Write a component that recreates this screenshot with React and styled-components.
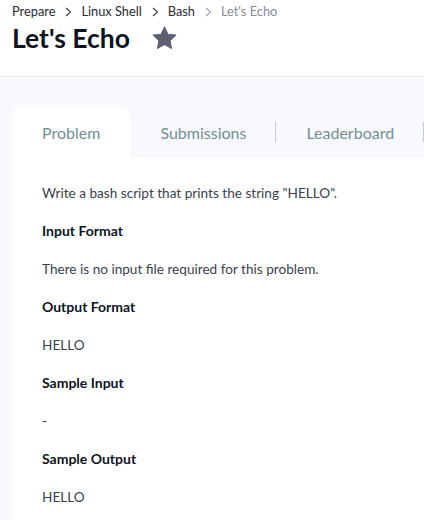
import styled, { createGlobalStyle } from "styled-components";

const GlobalStyle = createGlobalStyle`
  html, body {
    margin: 0;
    padding: 0;
    background: #f8f9fd;
    font-family: "Lato", "Noto Sans", sans-serif;
    overflow: hidden;
  }
`;

const crumbs = ["Prepare", "Linux Shell", "Bash"];
const tabs = ["Problem", "Submissions", "Leaderboard"];

const sections = [
    { body: 'Write a bash script that prints the string "HELLO".' },
    { title: "Input Format", body: "There is no input file required for this problem." },
    { title: "Output Format", body: "HELLO" },
    { title: "Sample Input", body: "-" },
    { title: "Sample Output", body: "HELLO" },
];

const Chevron = () => (
    <svg width="7" height="10" viewBox="0 0 7 10">
        <path d="M1 1l4.5 4L1 9" fill="none" stroke="currentColor" strokeWidth="1.1" />
    </svg>
);

const Star = () => (
    <svg width="25" height="24" viewBox="0 0 24 23">
        <path
            d="M12 0.8l3.3 7 7.5.9-5.5 5.2 1.4 7.6L12 17.8l-6.7 3.7 1.4-7.6L1.2 8.7l7.5-.9z"
            fill="#5e6070"
            stroke="#5e6070"
            strokeWidth="1"
            strokeLinejoin="round"
        />
    </svg>
);

const App = () => {
    return (
        <>
            <GlobalStyle />
            <Header>
                <Breadcrumbs>
                    {crumbs.map((c, i) => (
                        <Step key={c}>
                            <Crumb>{c}</Crumb>
                            <Sep $light={i === crumbs.length - 1}>
                                <Chevron />
                            </Sep>
                        </Step>
                    ))}
                    <Crumb $current>Let's Echo</Crumb>
                </Breadcrumbs>
                <TitleRow>
                    <Title>Let's Echo</Title>
                    <Star />
                </TitleRow>
            </Header>
            <Main>
                <TabBar>
                    {tabs.map((t, i) => (
                        <Tab key={t} $active={i === 0} $divider={i > 0}>
                            {t}
                        </Tab>
                    ))}
                </TabBar>
                <Panel>
                    {sections.map((s, i) => (
                        <div key={i}>
                            {s.title && <SectionTitle>{s.title}</SectionTitle>}
                            <Text>{s.body}</Text>
                        </div>
                    ))}
                </Panel>
            </Main>
        </>
    );
};

const Header = styled.header`
    background: #fff;
    height: 77px;
    padding: 3px 12px 0;
    box-sizing: border-box;
    border-bottom: 1px solid #e9ecf3;
`;

const Breadcrumbs = styled.nav`
    display: flex;
    align-items: center;
    font-size: 12.8px;
    line-height: 17px;
    white-space: nowrap;
`;

const Step = styled.span`
    display: flex;
    align-items: center;
`;

const Crumb = styled.span`
    color: ${(p) => (p.$current ? "#8a8c94" : "#2a2c33")};
`;

const Sep = styled.span`
    display: flex;
    color: ${(p) => (p.$light ? "#a0a3aa" : "#3a3c44")};
    margin: 0 9px 0 10px;
`;

const TitleRow = styled.div`
    display: flex;
    align-items: center;
    gap: 22px;
    margin-top: 3px;
`;

const Title = styled.h1`
    margin: 0;
    font-size: 26.5px;
    font-weight: 700;
    color: #0e141e;
    line-height: 30px;
`;

const Main = styled.main`
    padding: 30px 0 0 12px;
`;

const TabBar = styled.div`
    display: flex;
    height: 51px;
`;

const Tab = styled.div`
    position: relative;
    display: flex;
    align-items: center;
    padding: 0 30px;
    font-size: 16px;
    color: #738f93;
    white-space: nowrap;
    background: ${(p) => (p.$active ? "#fff" : "transparent")};
    border-radius: 7px 7px 0 0;

    &::after {
        content: "";
        display: ${(p) => (p.$divider ? "block" : "none")};
        position: absolute;
        right: 0;
        top: 15px;
        height: 20px;
        border-right: 1px solid #c4ccd0;
    }
`;

const Panel = styled.div`
    background: #fff;
    padding: 16px 30px 0;
    height: calc(100vh - 158px);
    box-sizing: border-box;
`;

const SectionTitle = styled.h3`
    margin: 0;
    font-size: 14px;
    font-weight: 700;
    color: #0e141e;
    line-height: 38px;
`;

const Text = styled.p`
    margin: 0;
    font-size: 13.6px;
    color: #39424e;
    line-height: 38px;
`;

export default App;
